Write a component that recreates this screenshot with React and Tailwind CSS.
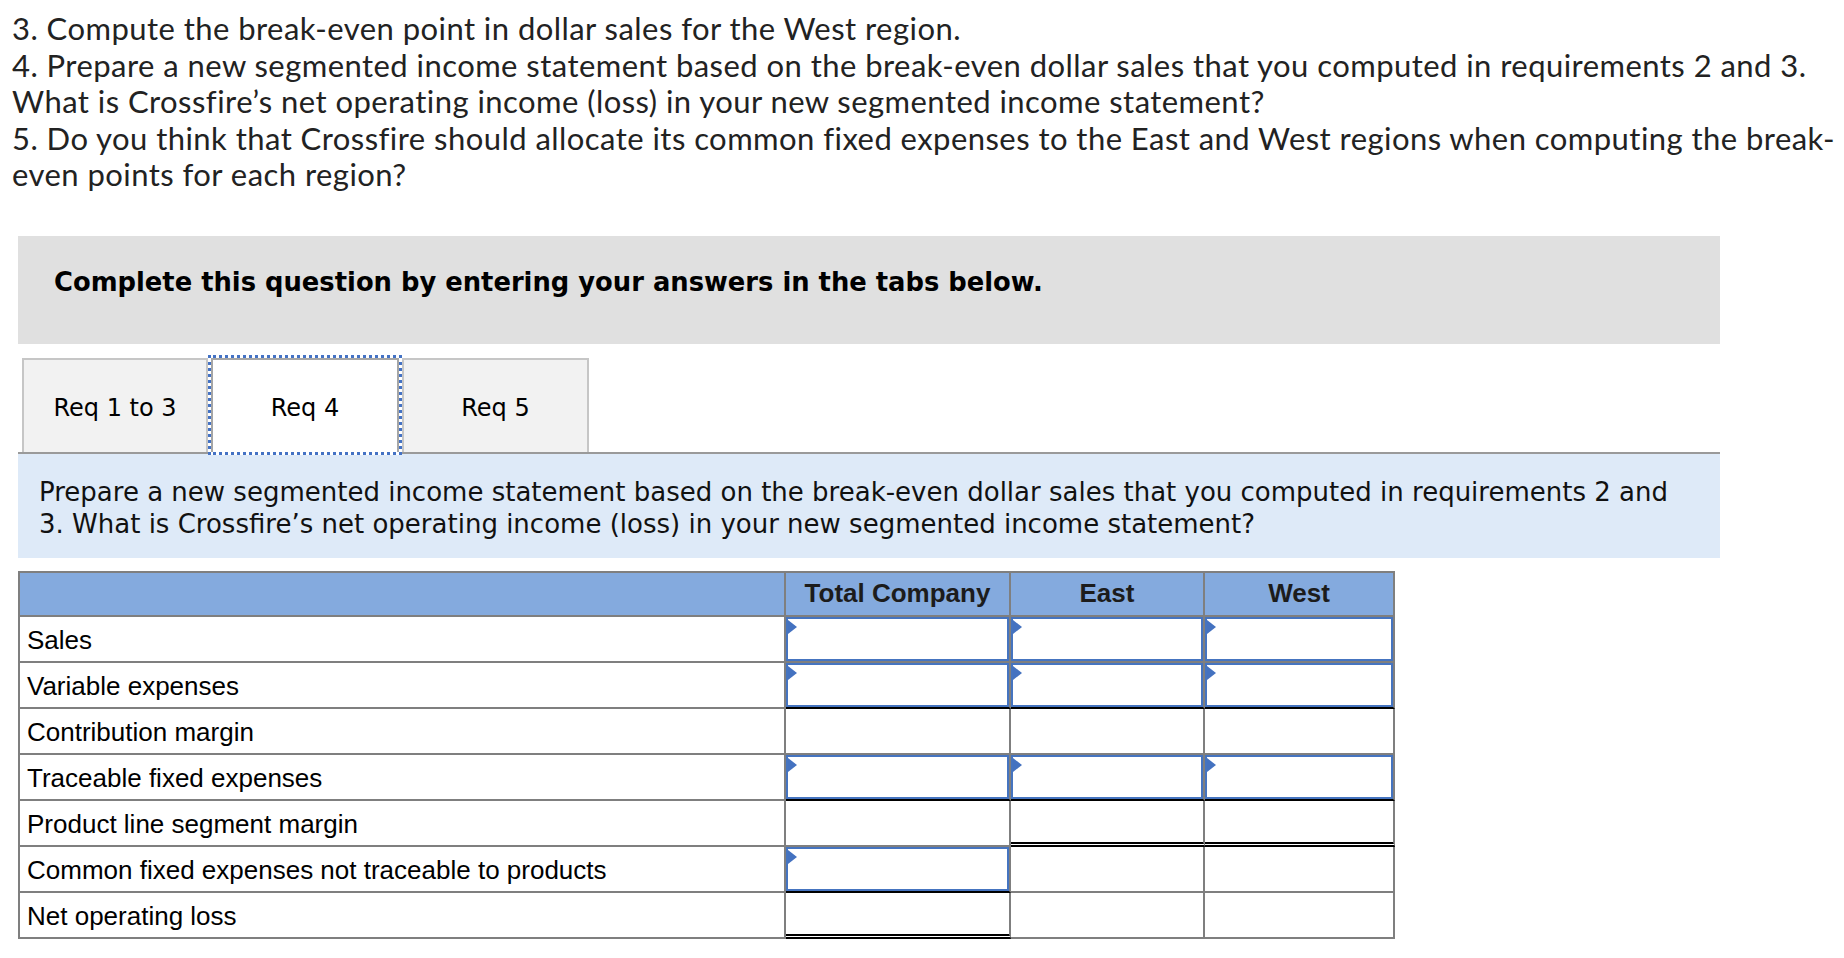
import React from 'react';

const questionLines = [
    '3. Compute the break-even point in dollar sales for the West region.',
    '4. Prepare a new segmented income statement based on the break-even dollar sales that you computed in requirements 2 and 3.',
    'What is Crossfire\u2019s net operating income (loss) in your new segmented income statement?',
    '5. Do you think that Crossfire should allocate its common fixed expenses to the East and West regions when computing the break-',
    'even points for each region?',
];

// each cell: [kind, bottom border]
const rows = [
    { label: 'Sales', cells: [['input', 'gray'], ['input', 'gray'], ['input', 'gray']] },
    { label: 'Variable expenses', cells: [['input', 'black'], ['input', 'black'], ['input', 'black']] },
    { label: 'Contribution margin', cells: [['empty', 'gray'], ['empty', 'gray'], ['empty', 'gray']] },
    { label: 'Traceable fixed expenses', cells: [['input', 'black'], ['input', 'black'], ['input', 'black']] },
    { label: 'Product line segment margin', cells: [['empty', 'gray'], ['empty', 'double'], ['empty', 'double']] },
    { label: 'Common fixed expenses not traceable to products', cells: [['input', 'black'], ['empty', 'gray'], ['empty', 'gray']] },
    { label: 'Net operating loss', cells: [['empty', 'double'], ['empty', 'gray'], ['empty', 'gray']] },
];

const bottomClass = {
    gray: 'border-b-2 border-b-[#7f7f7f]',
    black: 'border-b-2 border-b-black',
    double: 'border-b-[5px] border-b-black [border-bottom-style:double]',
};

const InputBox = () => (
    <div className="relative h-[44px] border-2 border-[#4574c0] bg-white">
        <svg className="absolute left-0 top-[1px]" width="9" height="14" viewBox="0 0 9 14">
            <polygon points="0,0 9,7 0,14" fill="#4472c0" />
        </svg>
    </div>
);

const ValueCell = ({ kind, bottom }) => (
    <td className={`p-0 border-r-2 border-r-[#7f7f7f] ${bottomClass[bottom]}`}>
        {kind === 'input' ? (
            <InputBox />
        ) : (
            <div className={bottom === 'double' ? 'h-[41px]' : 'h-[44px]'} />
        )}
    </td>
);

export default function App() {
    return (
        <div className="min-h-screen bg-white pb-4">
            {/* question text */}
            <div className="pl-[12px] pt-[10px] text-[31px] leading-[36.5px] tracking-[0.45px] text-[#222]" style={{ fontFamily: 'Lato, "Open Sans", sans-serif' }}>
                {questionLines.map((line, i) => (
                    <div key={i} className="whitespace-nowrap">{line}</div>
                ))}
            </div>

            <div className="ml-[18px] mt-[43px] w-[1702px]" style={{ fontFamily: '"DejaVu Sans", Verdana, sans-serif' }}>
                <div className="h-[108px] bg-[#e0e0e0] pl-[36px] pt-[31px]">
                    <p className="text-[25.8px] font-bold leading-[30px] text-black">
                        Complete this question by entering your answers in the tabs below.
                    </p>
                </div>

                {/* tabs */}
                <div className="mt-[11px] flex items-end border-b-2 border-[#9a9a9a] pl-[4px] text-[24px] text-black">
                    <div className="flex h-[94px] w-[186px] items-center justify-center pt-[4px] border-2 border-b-0 border-[#c6c6c6] bg-[#f2f2f2]">
                        Req 1 to 3
                    </div>
                    <div className="relative z-10 -mb-[3px] h-[100px] w-[194px] border-[3px] border-dotted border-[#4472c4] bg-white">
                        <div className="flex h-full items-center justify-center pt-[4px] border-2 border-b-0 border-[#a6a6a6]">
                            Req 4
                        </div>
                    </div>
                    <div className="flex h-[94px] w-[187px] items-center justify-center pt-[4px] border-2 border-b-0 border-[#c6c6c6] bg-[#f2f2f2]">
                        Req 5
                    </div>
                </div>

                <div className="bg-[#deeaf8] pl-[21px] pt-[22px] pb-[18px] text-[26px] leading-[32px] text-[#111]">
                    <div className="whitespace-nowrap">Prepare a new segmented income statement based on the break-even dollar sales that you computed in requirements 2 and</div>
                    <div className="whitespace-nowrap">3. What is Crossfire&rsquo;s net operating income (loss) in your new segmented income statement?</div>
                </div>
            </div>

            {/* income statement table */}
            <table
                className="ml-[18px] mt-[13px] w-[1377px] table-fixed border-separate border-spacing-0 border-l-2 border-t-2 border-[#7f7f7f] text-black"
                style={{ fontFamily: '"Liberation Sans", Arial, sans-serif' }}
            >
                <thead>
                    <tr className="bg-[#84aade]">
                        <th className="w-[766px] p-0 border-b-2 border-r-2 border-[#7f7f7f]">
                            <div className="h-[42px]" />
                        </th>
                        <th className="w-[225px] p-0 border-b-2 border-r-2 border-[#7f7f7f]">
                            <div className="flex h-[42px] items-center justify-center text-[26px] font-bold text-[#1c1c1c]">Total Company</div>
                        </th>
                        <th className="w-[194px] p-0 border-b-2 border-r-2 border-[#7f7f7f]">
                            <div className="flex h-[42px] items-center justify-center text-[26px] font-bold text-[#1c1c1c]">East</div>
                        </th>
                        <th className="w-[190px] p-0 border-b-2 border-r-2 border-[#7f7f7f]">
                            <div className="flex h-[42px] items-center justify-center text-[26px] font-bold text-[#1c1c1c]">West</div>
                        </th>
                    </tr>
                </thead>
                <tbody>
                    {rows.map((row) => (
                        <tr key={row.label}>
                            <td className="p-0 border-b-2 border-r-2 border-[#7f7f7f]">
                                <div className="flex h-[44px] items-center pl-[7px] pt-[3px] text-[26px] whitespace-nowrap">{row.label}</div>
                            </td>
                            {row.cells.map(([kind, bottom], i) => (
                                <ValueCell key={i} kind={kind} bottom={bottom} />
                            ))}
                        </tr>
                    ))}
                </tbody>
            </table>
        </div>
    );
}
